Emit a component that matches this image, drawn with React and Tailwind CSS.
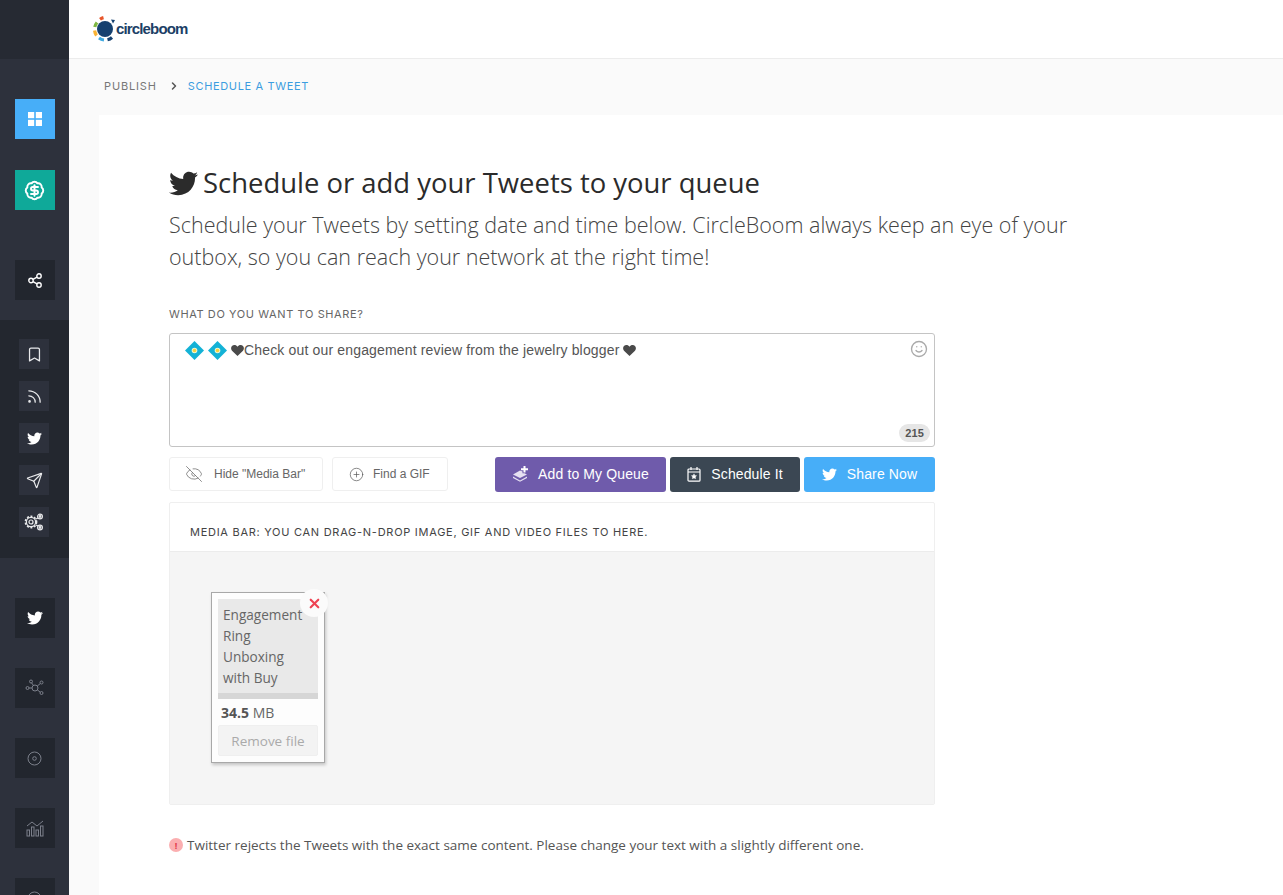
import React from "react";
import { FaTwitter } from "react-icons/fa";
import {
  BadgeDollarSign,
  Bookmark,
  ChevronRight,
  CirclePlus,
  EyeOff,
  Rss,
  Send,
  Smile,
  X,
} from "lucide-react";

const GridIcon = () => (
  <svg width="14" height="14" viewBox="0 0 14 14" fill="#fff">
    <rect x="0" y="0" width="6.2" height="6.2" />
    <rect x="7.8" y="0" width="6.2" height="6.2" />
    <rect x="0" y="7.8" width="6.2" height="6.2" />
    <rect x="7.8" y="7.8" width="6.2" height="6.2" />
  </svg>
);

const ShareIcon = () => (
  <svg width="14" height="15" viewBox="0 0 14 15" fill="none" stroke="currentColor" strokeWidth="1.4">
    <circle cx="3" cy="7.5" r="2.2" />
    <circle cx="11" cy="3" r="2.2" />
    <circle cx="11" cy="12" r="2.2" />
    <path d="M5 6.4l4-2.3M5 8.6l4 2.3" />
  </svg>
);

const RingIcon = () => (
  <svg width="15" height="15" viewBox="0 0 15 15" fill="none" stroke="currentColor" strokeWidth="1">
    <circle cx="7.5" cy="7.5" r="6.5" />
    <circle cx="7.5" cy="7.5" r="1.8" />
  </svg>
);

const NetworkIcon = () => (
  <svg width="20" height="18" viewBox="0 0 20 18" fill="none" stroke="currentColor" strokeWidth="1">
    <circle cx="10" cy="9" r="3" />
    <circle cx="2.5" cy="9" r="1.5" />
    <circle cx="6" cy="2.5" r="1.5" />
    <circle cx="16.5" cy="3.5" r="1.5" />
    <circle cx="16.5" cy="14" r="1.5" />
    <path d="M4 9h3M6.7 4l1.8 2.5M15.3 4.5l-3 2.5M15.2 13.2l-3-2.5" />
  </svg>
);

const ChartIcon = () => (
  <svg width="18" height="18" viewBox="0 0 18 18" fill="none" stroke="currentColor" strokeWidth="1">
    <rect x="1" y="11" width="2.5" height="6" />
    <rect x="5.5" y="8" width="2.5" height="9" />
    <rect x="10" y="11" width="2.5" height="6" />
    <rect x="14.5" y="7" width="2.5" height="10" />
    <path d="M1 7l5-4 5 4 6-5" />
  </svg>
);

const GearsIcon = () => (
  <svg width="20" height="18" viewBox="0 0 20 18" fill="none" stroke="currentColor" strokeWidth="1.2">
    <circle cx="7" cy="9" r="2" />
    <circle cx="7" cy="9" r="4.6" />
    <circle cx="7" cy="9" r="5.6" strokeDasharray="2 1.6" strokeWidth="1.6" />
    <circle cx="16" cy="3.5" r="2.4" />
    <circle cx="16" cy="14.5" r="2.4" />
    <circle cx="16" cy="3.5" r="0.8" fill="currentColor" />
    <circle cx="16" cy="14.5" r="0.8" fill="currentColor" />
    <path d="M12 6l2-1M12 12l2 1" />
  </svg>
);

const QueueIcon = () => (
  <svg width="16" height="16" viewBox="0 0 16 16" fill="#e6e0f2">
    <path d="M8 4.5L1 8.5l7 3.5 7-3.5-2.5-1.3H10.5V5.6z" />
    <path d="M1 10.6l7 3.9 7-3.9v1.4l-7 3.8-7-3.8z" />
    <path d="M11.5 0h2v2.3H16v1.9h-2.5v2.3h-2V4.2H9V2.3h2.5z" fill="#fff" />
  </svg>
);

const CalendarStarIcon = () => (
  <svg width="14" height="15" viewBox="0 0 14 15" fill="none" stroke="#fff" strokeWidth="1.2">
    <rect x="1" y="2" width="12" height="12.2" rx="1" />
    <path d="M1 5h12M4 0v3M10 0v3" />
    <path d="M7 6.8l.8 1.7 1.8.2-1.3 1.2.4 1.8L7 11l-1.7.7.4-1.8-1.3-1.2 1.8-.2z" fill="#fff" strokeWidth="0.4" />
  </svg>
);

const Diamond = () => (
  <svg width="19" height="19" viewBox="0 0 19 19" className="shrink-0">
    <path d="M9.5 0L19 9.5 9.5 19 0 9.5z" fill="#14b2d6" />
    <circle cx="9.5" cy="9.5" r="2.8" fill="#eef6d0" />
    <circle cx="9.5" cy="9.5" r="1.8" fill="#f7d13d" />
  </svg>
);

const Heart = () => (
  <svg width="13" height="11" viewBox="0 0 14 12" className="shrink-0">
    <path d="M7 12L1 6.2C-1.2 3.6.5 0 3.6 0 5 0 6.2.7 7 2c.8-1.3 2-2 3.4-2 3.1 0 4.8 3.6 2.6 6.2z" fill="#4a4a4a" />
  </svg>
);

const Logo = () => (
  <div className="flex items-center">
    <svg width="24" height="26" viewBox="0 0 24 26" fill="none" className="shrink-0">
      <circle cx="13" cy="13" r="8" fill="#15406f" />
      <path d="M8 3.2A11 11 0 0 1 11.5 1.6" stroke="#e8562a" strokeWidth="3.2" />
      <path d="M2.8 11A10.5 10.5 0 0 1 5 6.5" stroke="#7fb742" strokeWidth="3.2" />
      <path d="M4.5 19.5A10.5 10.5 0 0 1 2.6 14.5" stroke="#f9b233" strokeWidth="3.2" />
      <path d="M12 24A10.5 10.5 0 0 1 7 22" stroke="#3fa9e0" strokeWidth="3.2" />
      <path d="M20 21.5A10.5 10.5 0 0 1 15.5 23.8" stroke="#15406f" strokeWidth="3.2" />
      <path d="M19 3.5l4 .5-2 3.5z" fill="#15406f" />
    </svg>
    <span className="font-['Liberation_Sans',sans-serif] text-[15px] font-bold tracking-[-0.85px] text-[#1c3f66]">
      circleboom
    </span>
  </div>
);

const SideSquare = ({ children, className = "bg-[#22262e] text-white" }) => (
  <div className={`flex h-10 w-10 items-center justify-center ${className}`}>{children}</div>
);

const SmallSquare = ({ children }) => (
  <div className="flex h-[30px] w-[30px] items-center justify-center bg-[#2d313c] text-[#e8e9eb]">{children}</div>
);

const Sidebar = () => (
  <aside className="flex h-full w-[69px] shrink-0 flex-col overflow-hidden bg-[#2d313c]">
    <div className="h-[59px] shrink-0 bg-[#262a33]" />
    <div className="flex shrink-0 flex-col items-center pt-10">
      <SideSquare className="bg-[#47aef8] text-white">
        <GridIcon />
      </SideSquare>
      <SideSquare className="mt-[31px] bg-[#0fa999] text-white">
        <BadgeDollarSign size={21} strokeWidth={2.2} />
      </SideSquare>
      <div className="mt-[50px]">
        <SideSquare>
          <ShareIcon />
        </SideSquare>
      </div>
    </div>
    <div className="mt-5 flex h-[238px] shrink-0 flex-col items-start gap-3 bg-[#23272f] pl-[19px] pt-[19px]">
      <SmallSquare><Bookmark size={17} strokeWidth={1.8} /></SmallSquare>
      <SmallSquare><Rss size={17} strokeWidth={1.8} /></SmallSquare>
      <SmallSquare><FaTwitter size={15} className="text-white" /></SmallSquare>
      <SmallSquare><Send size={17} strokeWidth={1.7} /></SmallSquare>
      <SmallSquare><GearsIcon /></SmallSquare>
    </div>
    <div className="flex shrink-0 flex-col items-center gap-[30px] pt-10">
      <SideSquare><FaTwitter size={16} className="text-white" /></SideSquare>
      <SideSquare className="bg-[#22262e] text-[#7c808b]"><NetworkIcon /></SideSquare>
      <SideSquare className="bg-[#22262e] text-[#7c808b]"><RingIcon /></SideSquare>
      <SideSquare className="bg-[#22262e] text-[#7c808b]"><ChartIcon /></SideSquare>
      <SideSquare className="bg-[#22262e] text-[#7c808b]"><RingIcon /></SideSquare>
    </div>
  </aside>
);

const GhostButton = ({ icon, label, className }) => (
  <button className={`flex h-[34px] items-center rounded-[3px] border border-[#efefef] bg-white font-['Liberation_Sans',sans-serif] text-xs text-[#666] ${className}`}>
    {icon}
    {label}
  </button>
);

const ActionButton = ({ icon, label, className }) => (
  <button className={`flex h-[35px] items-center justify-center gap-[10px] rounded-[3px] pb-px font-['Liberation_Sans',sans-serif] text-sm tracking-[0.12px] text-white ${className}`}>
    {icon}
    {label}
  </button>
);

const FileCard = () => (
  <div className="relative flex h-[171px] w-[114px] flex-col border border-[#a8a8a8] bg-[#fdfdfd] px-[6px] pt-[6px] shadow-[1px_2px_3px_rgba(0,0,0,0.2)]">
    <div className="h-[100px] shrink-0 border-b-[6px] border-[#d6d6d6] bg-[#e9e9e9] px-[5px] pt-[5px] font-['Open_Sans',sans-serif] text-[13.6px] leading-[21px] text-[#666]">
      Engagement Ring Unboxing with Buy
    </div>
    <div className="mt-[4px] pl-[3px] font-['Open_Sans',sans-serif] text-sm leading-5 text-[#666]">
      <b className="font-bold text-[#555]">34.5</b> MB
    </div>
    <div className="mt-[2px] flex h-[31px] items-center justify-center rounded-[2px] border border-[#efefef] bg-[#f3f3f3] pt-px font-['Open_Sans',sans-serif] text-[13.5px] text-[#aaa]">
      Remove file
    </div>
    <div className="absolute -right-[4px] -top-[4px] flex h-7 w-7 items-center justify-center rounded-full bg-[#fbfbfb]">
      <X size={15} strokeWidth={3.5} className="text-[#ee4253]" />
    </div>
  </div>
);

export default function App() {
  return (
    <div className="flex h-screen overflow-hidden bg-[#fafafa] font-['Open_Sans',sans-serif]">
      <Sidebar />
      <main className="flex min-w-0 flex-1 flex-col">
        <header className="flex h-[59px] shrink-0 items-center border-b border-[#ececec] bg-white pl-[23px]">
          <Logo />
        </header>
        <nav className="flex h-[56px] shrink-0 items-center pb-[2px] pl-[35px] font-['Inter',sans-serif] text-[11px] tracking-[0.6px]">
          <span className="tracking-[0.85px] text-[#777]">PUBLISH</span>
          <ChevronRight size={12} strokeWidth={3} className="ml-[11px] mr-[8px] text-[#555]" />
          <span className="tracking-[0.65px] text-[#3b9de0]">SCHEDULE A TWEET</span>
        </nav>
        <section className="ml-[30px] flex-1 bg-white pl-[70px] pt-[50px]">
          <h1 className="flex items-center gap-[5px] text-[27.45px] leading-9 text-[#2b2b2b]">
            <FaTwitter size={29} className="text-[#2b2b2b]" />
            Schedule or add your Tweets to your queue
          </h1>
          <p className="mt-[8px] w-[920px] text-[21.5px] font-light leading-8 text-[#444]">
            Schedule your Tweets by setting date and time below. CircleBoom always keep an eye of your outbox, so you can reach your network at the right time!
          </p>
          <div className="mt-[33px] font-['Inter',sans-serif] text-[11px] leading-4 tracking-[0.6px] text-[#666]">
            WHAT DO YOU WANT TO SHARE?
          </div>
          <div className="w-[766px]">
            <div className="relative mt-[11px] h-[114px] rounded-[3px] border border-[#c4c4c4] bg-white pl-[15px] pt-[6px] font-['Liberation_Sans',sans-serif] text-sm tracking-[0.16px] text-[#555]">
              <div className="flex h-5 items-center">
                <Diamond />
                <span className="ml-[4px]"><Diamond /></span>
                <span className="ml-[4px] flex"><Heart /></span>
                <span>Check out our engagement review from the jewelry blogger</span>
                <span className="ml-[4px] flex"><Heart /></span>
              </div>
              <Smile size={18} strokeWidth={1.8} className="absolute right-[6px] top-[6px] text-[#aaa]" />
              <span className="absolute bottom-[4px] right-[4px] rounded-full bg-[#e6e6e6] px-[6px] text-[11px] font-bold leading-[18px] text-[#555]">
                215
              </span>
            </div>
            <div className="mt-[10px] flex items-start">
              <GhostButton
                className="w-[154px] pl-[15px]"
                icon={<EyeOff size={18} strokeWidth={1.1} className="mr-[11px] text-[#777]" />}
                label={'Hide "Media Bar"'}
              />
              <GhostButton
                className="ml-[9px] w-[116px] pl-[16px]"
                icon={<CirclePlus size={15} strokeWidth={1.1} className="mr-[9px] text-[#555]" />}
                label="Find a GIF"
              />
              <div className="ml-auto flex gap-1">
                <ActionButton className="w-[171px] bg-[#6f5bab]" icon={<QueueIcon />} label="Add to My Queue" />
                <ActionButton className="w-[130px] bg-[#3b4753]" icon={<CalendarStarIcon />} label="Schedule It" />
                <ActionButton className="w-[131px] bg-[#47aef8]" icon={<FaTwitter size={15} />} label="Share Now" />
              </div>
            </div>
            <div className="mt-[10px] flex h-[303px] flex-col rounded-[2px] border border-[#efefef] bg-white">
              <div className="h-[49px] shrink-0 border-b border-[#ececec] pl-5 pt-[21px] font-['Inter',sans-serif] text-[11px] leading-4 tracking-[0.73px] text-[#444]">
                MEDIA BAR: YOU CAN DRAG-N-DROP IMAGE, GIF AND VIDEO FILES TO HERE.
              </div>
              <div className="flex-1 bg-[#f5f5f5] pl-[41px] pt-10">
                <FileCard />
              </div>
            </div>
            <div className="mt-[30px] flex items-center gap-[4px] whitespace-nowrap text-[13.5px] leading-5 text-[#555]">
              <span className="flex h-[14px] w-[14px] items-center justify-center rounded-full bg-[#fbaeb0] text-[9px] font-bold leading-none text-[#e23b4a]">
                !
              </span>
              Twitter rejects the Tweets with the exact same content. Please change your text with a slightly different one.
            </div>
          </div>
        </section>
      </main>
    </div>
  );
}
